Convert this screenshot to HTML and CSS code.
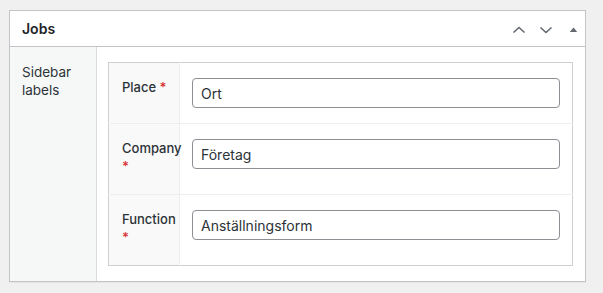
FILE: index.html
```html
<!DOCTYPE html>
<html>
<head>
<meta charset="utf-8">
<link rel="stylesheet" href="styles.css">
</head>
<body>
<div class="postbox">
  <div class="postbox-header">
    <h2 class="title">Jobs</h2>
    <div class="handle-actions">
      <svg class="ico" width="14" height="10" viewBox="0 0 14 10"><path d="M1.5 7.5 L7 2.5 L12.5 7.5" fill="none" stroke="#646970" stroke-width="1.6"/></svg>
      <svg class="ico" width="14" height="10" viewBox="0 0 14 10"><path d="M1.5 2.5 L7 7.5 L12.5 2.5" fill="none" stroke="#646970" stroke-width="1.6"/></svg>
      <svg class="ico tri" width="9" height="10" viewBox="0 0 9 10"><path d="M0.8 7 L4.5 2.6 L8.2 7 Z" fill="#646970"/></svg>
    </div>
  </div>
  <div class="inside">
    <div class="side">Sidebar labels</div>
    <div class="main">
      <table class="fields">
        <colgroup><col class="c-label"><col></colgroup>
        <tr>
          <td class="label"><label>Place <span class="req">*</span></label></td>
          <td class="input"><input type="text" value="Ort"></td>
        </tr>
        <tr>
          <td class="label"><label>Company <span class="req">*</span></label></td>
          <td class="input"><input type="text" value="Företag"></td>
        </tr>
        <tr>
          <td class="label"><label>Function <span class="req">*</span></label></td>
          <td class="input"><input type="text" value="Anställningsform"></td>
        </tr>
      </table>
    </div>
  </div>
</div>
</body>
</html>
```

FILE: styles.css
```css
html, body {
  margin: 0;
  padding: 0;
  background: #f0f0f1;
  font-family: Inter, "Noto Sans", sans-serif;
  color: #1d2327;
}
body {
  padding: 10px 17px 13px 9px;
}
.postbox {
  background: #fff;
  border: 1px solid #c3c4c7;
  box-shadow: 0 1px 1px rgba(0,0,0,0.04);
}
.postbox-header {
  height: 35px;
  border-bottom: 1px solid #c3c4c7;
  display: flex;
  align-items: center;
  justify-content: space-between;
  padding: 0 7px 0 12px;
}
.title {
  margin: 0;
  font-size: 14px;
  font-weight: 600;
  line-height: 1.4;
}
.handle-actions {
  display: flex;
  align-items: center;
  gap: 13px;
  padding-top: 2px;
}
.ico { display: block; }
.tri { margin-left: 3px; }
.inside {
  display: flex;
}
.side {
  width: 74px;
  flex: none;
  background: #f6f7f7;
  border-right: 1px solid #dcdcde;
  padding: 16px 0 0 12px;
  font-size: 13.5px;
  line-height: 18px;
  color: #2c3338;
  font-weight: 400;
}
.main {
  flex: 1;
  padding: 15px 12px 15px 11px;
}
.fields {
  width: 100%;
  table-layout: fixed;
  border-collapse: collapse;
  border: 1px solid #ccd0d4;
}
.c-label { width: 71px; }
.fields tr + tr td {
  border-top: 1px solid #eeeeee;
}
.fields td {
  padding: 15px 12px;
  vertical-align: top;
}
.fields td.label {
  background: #f9f9f9;
  border-right: 1px solid #eeeeee;
  padding: 15px 0 15px 13px;
  overflow: visible;
  white-space: normal;
}
.label label {
  display: block;
  width: 56px;
  font-size: 13px;
  font-weight: 500;
  line-height: 18px;
  color: #2c3338;
  margin: 0 0 4px;
}
.req {
  color: #d63638;
  font-weight: 600;
}
.fields input {
  display: block;
  box-sizing: border-box;
  width: 100%;
  height: 30px;
  border: 1px solid #8c8f94;
  border-radius: 4px;
  padding: 0 8px;
  font-family: Inter, "Noto Sans", sans-serif;
  font-size: 14px;
  color: #2c3338;
  background: #fff;
  outline: none;
}
```
